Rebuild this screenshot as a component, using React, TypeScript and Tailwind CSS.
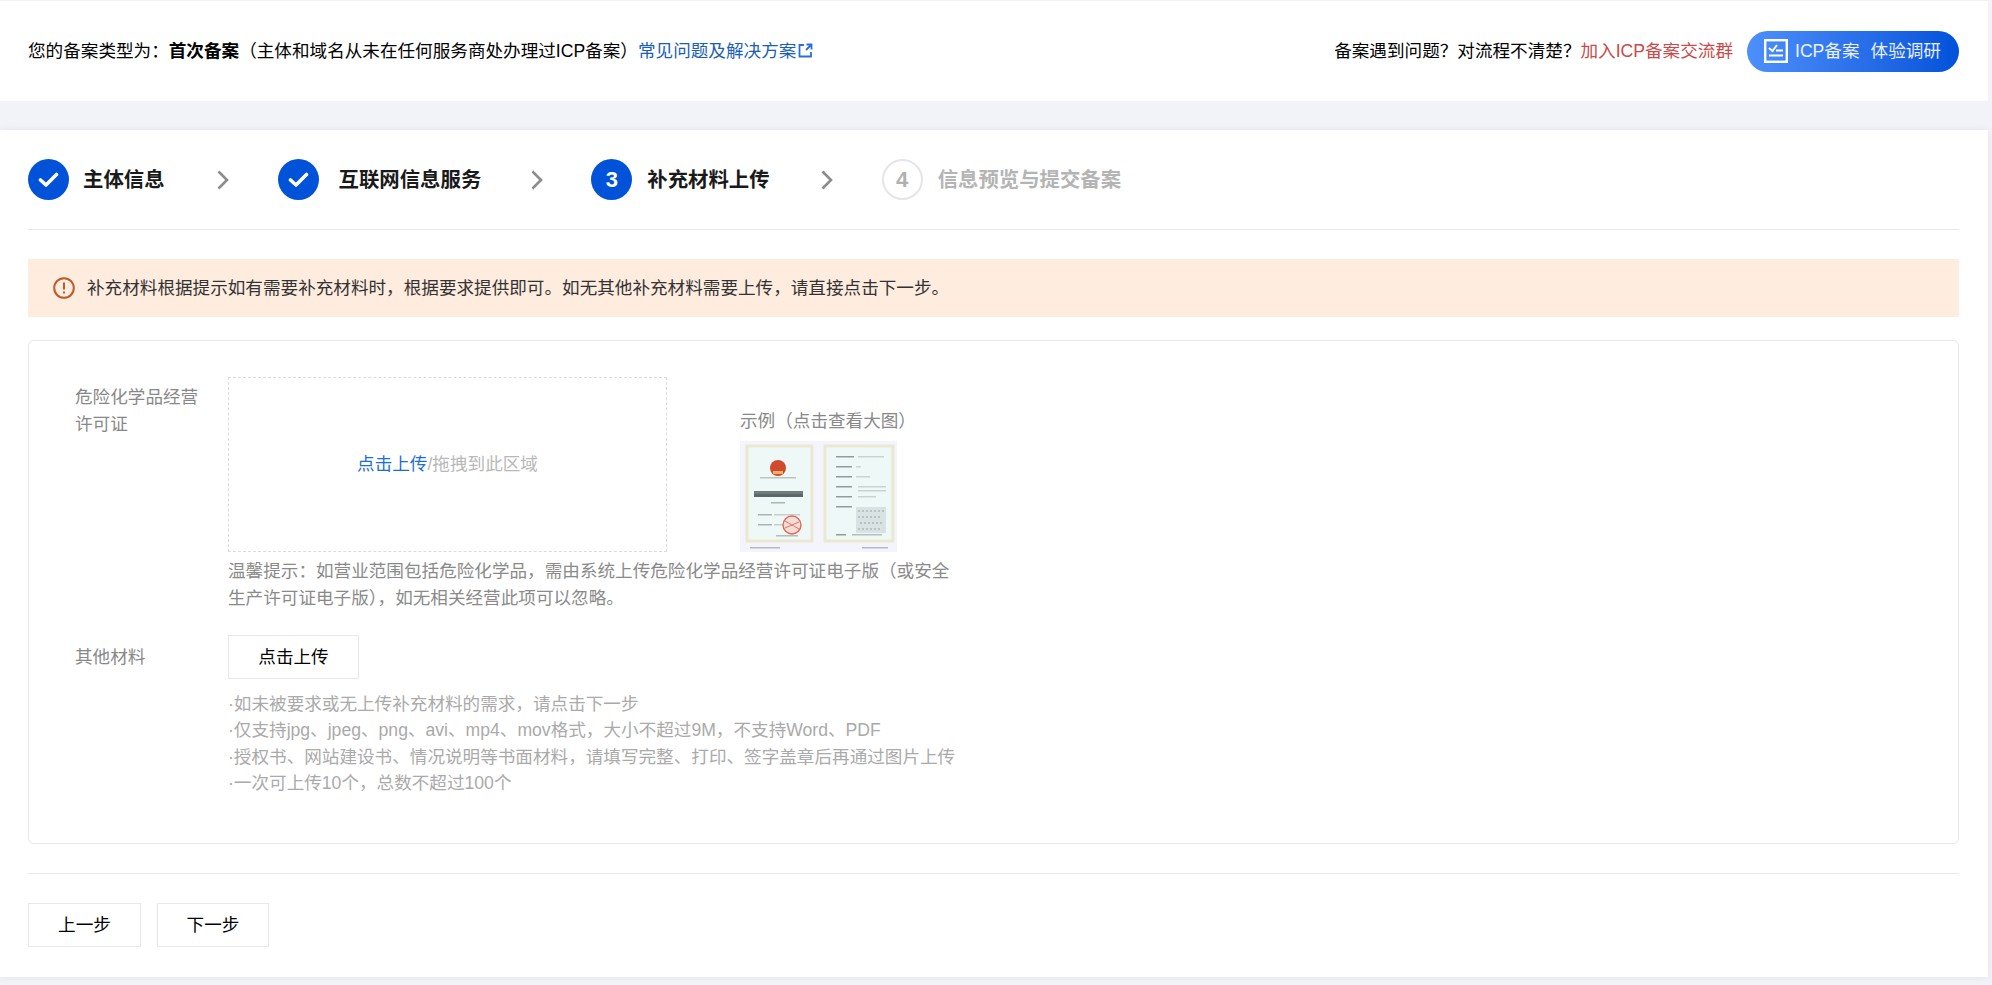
import React from "react";

const C = "\uFF1A";
const K = "\uFF0C";
const L = "\uFF08";
const R = "\uFF09";
const Q = "\uFF1F";

const Check = () => (
  <svg width="21" height="16" viewBox="0 0 21 16" fill="none" stroke="#fff" strokeWidth="3.6" strokeLinecap="round" strokeLinejoin="round">
    <path d="M2.5 8 L8 13 L18.5 2.5" />
  </svg>
);

const Chevron = () => (
  <svg width="12" height="20" viewBox="0 0 12 20" fill="none" stroke="#8c8c8c" strokeWidth="2.6" className="shrink-0">
    <path d="M1.5 1.5 L10 10 L1.5 18.5" />
  </svg>
);

const leftLines = [
  [20, 36, 36, "#b9c4c4"],
  [14, 50, 49, "#6d7c7e"],
  [14, 53, 49, "#59686a"],
  [31, 61, 14, "#a7b5b3"],
  [18, 73, 14, "#a7b5b3"],
  [34, 73, 26, "#c6d0ce"],
  [18, 83, 14, "#a7b5b3"],
  [34, 83, 26, "#c6d0ce"],
  [36, 94, 22, "#b3bfbd"],
] as const;

const rightLines = [
  [96, 15, 18, "#8f9e9c"], [118, 15, 26, "#c9d3d1"],
  [96, 25, 16, "#8f9e9c"], [116, 25, 5, "#c9d3d1"],
  [96, 35, 16, "#8f9e9c"], [116, 35, 14, "#c9d3d1"],
  [96, 45, 16, "#8f9e9c"], [118, 45, 28, "#c9d3d1"],
  [96, 49, 16, "#f0f6f5"], [118, 49, 28, "#c9d3d1"],
  [96, 55, 16, "#8f9e9c"], [118, 55, 18, "#c9d3d1"],
  [96, 65, 16, "#8f9e9c"],
  [96, 93, 10, "#8f9e9c"], [112, 93, 30, "#b3bfbd"],
] as const;

const Cert = () => (
  <svg width="157" height="111" viewBox="0 0 157 111" className="blur-[0.5px]">
    <rect width="157" height="111" fill="#f4f5fc" />
    <rect x="7" y="5" width="65" height="95" fill="#eef8f6" stroke="#ebe8d2" strokeWidth="3" />
    <rect x="85" y="5" width="68" height="95" fill="#eef8f6" stroke="#ebe8d2" strokeWidth="3" />
    <circle cx="38" cy="27" r="8" fill="#cf4a30" />
    <rect x="33" y="30" width="10" height="3" fill="#e6b45a" />
    {leftLines.map(([x, y, w, c], i) => (
      <rect key={i} x={x} y={y} width={w} height={i === 1 || i === 2 ? 3 : 1.5} fill={c} />
    ))}
    {rightLines.map(([x, y, w, c], i) => (
      <rect key={i} x={x} y={y} width={w} height="1.5" fill={c} />
    ))}
    <rect x="116" y="66" width="30" height="26" fill="#d8e2e2" />
    <path d="M118 70 H144 M118 76 H140 M120 82 H144 M118 88 H142" stroke="#b5c3c3" strokeWidth="2" strokeDasharray="2 2" />
    <circle cx="52" cy="84" r="9" fill="#f6dcd6" stroke="#dc6a58" strokeWidth="1.4" />
    <path d="M45 80 L59 88 M45 87 L59 81" stroke="#dc6a58" strokeWidth="0.9" />
    <rect x="10" y="106" width="30" height="1.5" fill="#b4bac4" />
    <rect x="122" y="106" width="26" height="1.5" fill="#b4bac4" />
  </svg>
);

const Btn = ({ w, children }: { w: string; children: React.ReactNode }) => (
  <button className={`${w} h-[44px] border border-[#e8e8e8] bg-white text-[17.6px] text-black flex items-center justify-center`}>
    {children}
  </button>
);

export default function App() {
  return (
    <div className="h-[985px] w-[1992px] overflow-hidden bg-[#f2f3f8] pr-[4px] pt-px text-[17.6px] text-black font-['Liberation_Sans','Noto_Sans_CJK_SC',sans-serif]">
      <header className="h-[100px] bg-white flex items-center justify-between pl-[28px] pr-[29px]">
        <div className="flex items-center whitespace-nowrap">
          <span>{`您的备案类型为${C}`}</span>
          <b className="font-bold">首次备案</b>
          <span>{`${L}主体和域名从未在任何服务商处办理过ICP备案${R}`}</span>
          <span className="text-[#1a5eb8]">常见问题及解决方案</span>
          <svg width="15" height="15" viewBox="0 0 15 15" fill="none" stroke="#2b6fd6" strokeWidth="1.8" className="ml-[2px]">
            <path d="M6 2 H1.5 V13.5 H13 V9" />
            <path d="M8 7 L13 2 M8.5 1.5 H13.5 V6.5" />
          </svg>
        </div>
        <div className="flex items-center whitespace-nowrap">
          <span>{`备案遇到问题${Q}对流程不清楚${Q}`}</span>
          <span className="text-[#c94a4a]">加入ICP备案交流群</span>
          <div className="ml-[14px] w-[212px] h-[41px] rounded-full bg-gradient-to-r from-[#4d8ffb] to-[#0052d9] flex items-center pl-[17px] text-white/90">
            <svg width="24" height="24" viewBox="0 0 24 24" className="shrink-0">
              <rect x="1.2" y="1.2" width="21.6" height="21.6" fill="none" stroke="#fff" strokeWidth="2.4" />
              <path d="M5 9 L8.5 12 L13 6" fill="none" stroke="#fff" strokeWidth="2" />
              <rect x="12" y="10.5" width="7" height="2" fill="#fff" />
              <rect x="5" y="15.5" width="14" height="2" fill="#fff" />
            </svg>
            <span className="ml-[7px]">ICP备案</span>
            <span className="ml-[11px]">体验调研</span>
          </div>
        </div>
      </header>

      <main className="mt-[29px] h-[847px] bg-white px-[28px] pr-[29px] pt-[29px] shadow-[0_0_8px_rgba(0,0,0,0.07)]">
        <div className="flex items-center h-[41px] whitespace-nowrap text-[20.4px] font-bold text-[#1a1a1a]">
          <span className="w-[41px] h-[41px] rounded-full bg-[#0052d9] flex items-center justify-center"><Check /></span>
          <span className="ml-[14px] pt-[2px]">主体信息</span>
          <span className="ml-[52px] mr-[49px]"><Chevron /></span>
          <span className="w-[41px] h-[41px] rounded-full bg-[#0052d9] flex items-center justify-center"><Check /></span>
          <span className="ml-[20px] pt-[2px]">互联网信息服务</span>
          <span className="ml-[50px] mr-[48px]"><Chevron /></span>
          <span className="w-[41px] h-[41px] rounded-full bg-[#0052d9] text-white text-[22px] flex items-center justify-center">3</span>
          <span className="ml-[15px] pt-[2px]">补充材料上传</span>
          <span className="ml-[51px] mr-[49px]"><Chevron /></span>
          <span className="w-[41px] h-[41px] rounded-full border-2 border-[#e3e5ea] text-[#b0b0b0] text-[22px] flex items-center justify-center">4</span>
          <span className="ml-[15px] pt-[2px] text-[#b4b4b4]">信息预览与提交备案</span>
        </div>
        <div className="mt-[29px] h-px bg-[#e9e9e9]" />

        <div className="mt-[29px] h-[58px] bg-[#feecdf] flex items-center pl-[25px] text-[#333]">
          <svg width="22" height="22" viewBox="0 0 22 22" fill="none" stroke="#c05a2a" strokeWidth="2" className="shrink-0">
            <circle cx="11" cy="11" r="9.8" />
            <path d="M11 5.5 V12.5 M11 14.5 V16.5" />
          </svg>
          <span className="ml-[12px]">{`补充材料根据提示如有需要补充材料时${K}根据要求提供即可。如无其他补充材料需要上传${K}请直接点击下一步。`}</span>
        </div>

        <section className="mt-[23px] h-[504px] border border-[#e8e8e8] rounded-[6px] pl-[46px] pt-[36px]">
          <div className="flex">
            <div className="w-[153px] shrink-0 mt-[7px] leading-[27px] text-[#888]">危险化学品经营<br />许可证</div>
            <div>
              <div className="flex">
                <div className="w-[439px] h-[175px] border border-dashed border-[#dcdcdc] flex items-center justify-center">
                  <span className="text-[#1a6fd6]">点击上传</span>
                  <span className="text-[#b8b8b8]">/拖拽到此区域</span>
                </div>
                <div className="ml-[73px] flex flex-col justify-end">
                  <span className="leading-[27px] text-[#888]">{`示例${L}点击查看大图${R}`}</span>
                  <div className="mt-[6px] h-[111px]"><Cert /></div>
                </div>
              </div>
              <p className="mt-[6px] leading-[27px] text-[#8a8a8a] whitespace-nowrap">
                {`温馨提示${C}如营业范围包括危险化学品${K}需由系统上传危险化学品经营许可证电子版${L}或安全`}<br />
                {`生产许可证电子版${R}${K}如无相关经营此项可以忽略。`}
              </p>
            </div>
          </div>
          <div className="flex mt-[23px]">
            <div className="w-[153px] shrink-0 leading-[44px] text-[#888]">其他材料</div>
            <div>
              <Btn w="w-[131px]">点击上传</Btn>
              <div className="mt-[12px] leading-[26.4px] text-[#aaa] whitespace-nowrap">
                <p>{`·如未被要求或无上传补充材料的需求${K}请点击下一步`}</p>
                <p>{`·仅支持jpg、jpeg、png、avi、mp4、mov格式${K}大小不超过9M${K}不支持Word、PDF`}</p>
                <p>{`·授权书、网站建设书、情况说明等书面材料${K}请填写完整、打印、签字盖章后再通过图片上传`}</p>
                <p>{`·一次可上传10个${K}总数不超过100个`}</p>
              </div>
            </div>
          </div>
        </section>

        <div className="mt-[29px] h-px bg-[#e9e9e9]" />
        <div className="mt-[29px] flex gap-[16px]">
          <Btn w="w-[113px]">上一步</Btn>
          <Btn w="w-[112px]">下一步</Btn>
        </div>
      </main>
    </div>
  );
}
